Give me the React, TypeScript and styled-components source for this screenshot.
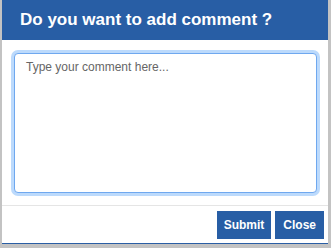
import React from "react";
import styled, { createGlobalStyle } from "styled-components";

const Global = createGlobalStyle`
  html, body { margin: 0; padding: 0; background: #c3c3c3; }
  body { font-family: "Liberation Sans", Arial, sans-serif; }
`;

const Page = styled.div`
  padding-left: 2px;
  width: 326px;
  height: 248px;
`;

const Dialog = styled.div`
  background: #ffffff;
  height: 243px;
  border-bottom: 1px solid #2a5ea4;
  display: flex;
  flex-direction: column;
`;

const Header = styled.div`
  height: 40px;
  flex: none;
  background: #285ea5;
  color: #fff;
  display: flex;
  align-items: center;
  padding-left: 18px;
  font-size: 17px;
  font-weight: bold;
`;

const Body = styled.div`
  padding: 13px 10px 0 12px;
  height: 166px;
  flex: none;
  box-sizing: border-box;
  border-bottom: 1px solid #e5e5e5;
`;

const TextArea = styled.textarea`
  display: block;
  box-sizing: border-box;
  width: 303px;
  height: 140px;
  border: 1px solid #6fa8ef;
  border-radius: 4px;
  box-shadow: 0 0 0 3px #bcdafc;
  outline: none;
  resize: none;
  padding: 6px 11px;
  font-family: "Liberation Sans", Arial, sans-serif;
  font-size: 12px;
  color: #333;
  &::placeholder { color: #666; }
`;

const Footer = styled.div`
  display: flex;
  justify-content: flex-end;
  gap: 4px;
  padding: 5px 4px 0 0;
`;

const Button = styled.button<{ $px: number }>`
  height: 28px;
  padding: 0 ${(p) => p.$px}px;
  background: #285ea5;
  color: #fff;
  border: none;
  font-family: "Liberation Sans", Arial, sans-serif;
  font-size: 12px;
  font-weight: bold;
  cursor: pointer;
`;

export default function App() {
  return (
    <>
      <Global />
      <Page>
        <Dialog>
          <Header>Do you want to add comment ?</Header>
          <Body>
            <TextArea placeholder="Type your comment here..." />
          </Body>
          <Footer>
            <Button $px={7}>Submit</Button>
            <Button $px={8}>Close</Button>
          </Footer>
        </Dialog>
      </Page>
    </>
  );
}
